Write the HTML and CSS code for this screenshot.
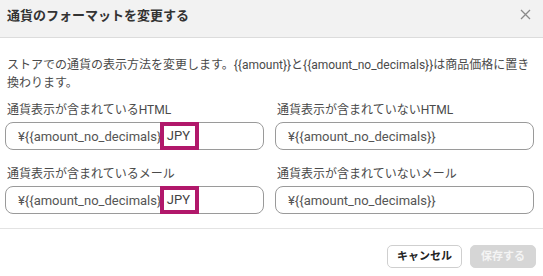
FILE: index.html
```html
<!DOCTYPE html>
<html lang="ja">
<head>
    <meta charset="UTF-8">
    <meta name="viewport" content="width=device-width, initial-scale=1.0">
    <title>通貨のフォーマットを変更する</title>
    <link rel="stylesheet" href="styles.css">
</head>
<body>

<div class="modal">
    <div class="modal-header">
        <h1>通貨のフォーマットを変更する</h1>
        <span class="close">
            <svg width="11" height="11" viewBox="0 0 11 11"><path d="M1 1L10 10M10 1L1 10" stroke="#8a8a8a" stroke-width="1.3" fill="none"/></svg>
        </span>
    </div>

    <div class="modal-body">
        <p class="desc">ストアでの通貨の表示方法を変更します。{{amount}}と{{amount_no_decimals}}は商品価格に置き換わります。</p>

        <div class="fields">
            <div class="field">
                <label>通貨表示が含まれているHTML</label>
                <div class="input">¥{{amount_no_decimals}}<span class="mark">JPY</span></div>
            </div>
            <div class="field">
                <label>通貨表示が含まれていないHTML</label>
                <div class="input">¥{{amount_no_decimals}}</div>
            </div>
            <div class="field">
                <label>通貨表示が含まれているメール</label>
                <div class="input">¥{{amount_no_decimals}}<span class="mark">JPY</span></div>
            </div>
            <div class="field">
                <label>通貨表示が含まれていないメール</label>
                <div class="input">¥{{amount_no_decimals}}</div>
            </div>
        </div>
    </div>

    <div class="modal-footer">
        <button class="btn btn-cancel">キャンセル</button>
        <button class="btn btn-disabled">保存する</button>
    </div>
</div>

</body>
</html>
```

FILE: styles.css
```css
html, body {
    overflow: hidden;
}
body {
    margin: 0;
    font-family: Roboto, "Noto Sans CJK JP", sans-serif;
    font-size: 12px;
    color: #4a4a4a;
    background-color: #fff;
}
.modal {
    width: 543px;
}
.modal-header {
    display: flex;
    align-items: center;
    justify-content: space-between;
    height: 38px;
    padding: 0 12px 0 7px;
    background-color: #f2f2f2;
    border-bottom: 1px solid #dcdcdc;
    box-sizing: border-box;
}
.modal-header h1 {
    margin: 0;
    font-size: 13px;
    font-weight: bold;
    color: #333;
    margin-top: -8px;
}
.close {
    display: flex;
    margin-top: -8px;
}
.modal-body {
    padding: 18px 9px 14px 5px;
    border-bottom: 1px solid #e3e3e3;
}
.desc {
    margin: 0 0 9px 2px;
    line-height: 18px;
}
.fields {
    display: grid;
    grid-template-columns: 1fr 1fr;
    column-gap: 11px;
    row-gap: 15px;
}
.field label {
    display: block;
    line-height: 18px;
    padding-left: 2px;
    margin-bottom: 3px;
}
.input {
    display: flex;
    align-items: center;
    height: 28px;
    padding-left: 12px;
    border: 1px solid #9a9a9a;
    border-radius: 8px;
    box-sizing: border-box;
    font-size: 13px;
    color: #555;
}
.mark {
    display: inline-block;
    margin-left: -6px;
    padding: 2px 5px 2px 3px;
    line-height: 16px;
    border: 4px solid #b1186b;
    background-color: #fff;
    color: #444;
}
.modal-footer {
    display: flex;
    justify-content: flex-end;
    gap: 8px;
    padding: 16px 7px 6px 0;
}
.btn {
    height: 23px;
    padding: 0;
    font-family: inherit;
    font-size: 11px;
    font-weight: bold;
    line-height: 21px;
    color: #222;
    background-color: #fff;
    border: 1px solid #cfcfcf;
    border-radius: 5px;
}
.btn-cancel {
    width: 75px;
}
.btn-disabled {
    width: 66px;
    color: #f4f4f4;
    background-color: #d6d6d6;
    border-color: #d6d6d6;
}
```
